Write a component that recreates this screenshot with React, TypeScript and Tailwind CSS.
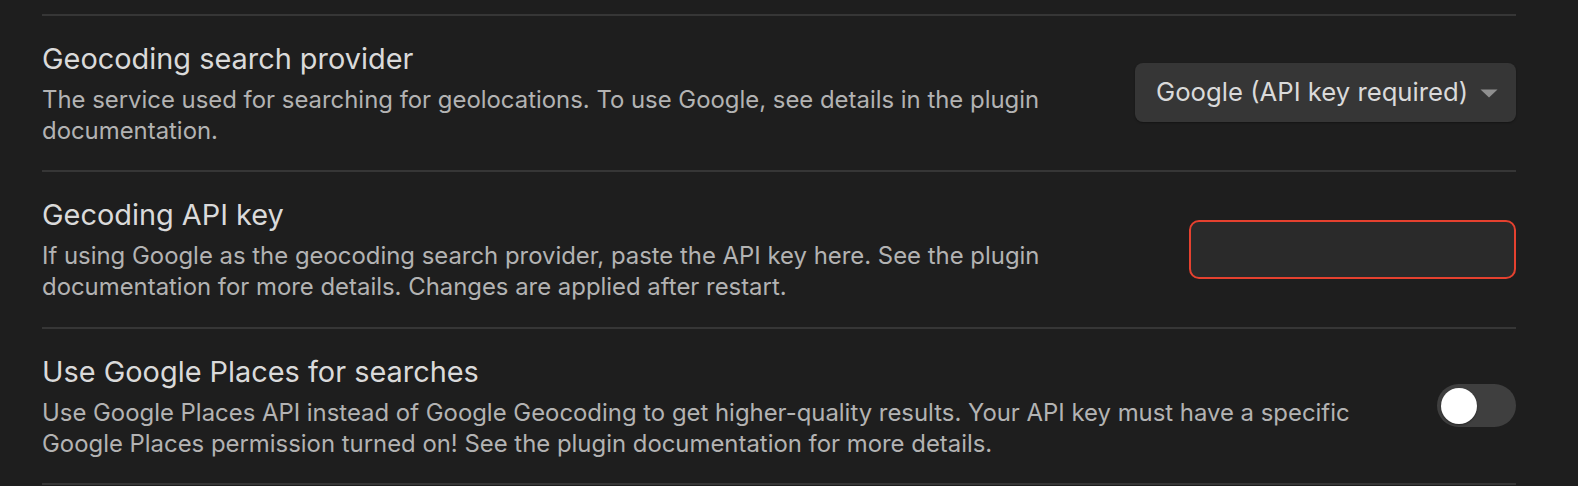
import React from "react";

function Row({
  title,
  lines,
  control,
}: {
  title: string;
  lines: string[];
  control: React.ReactNode;
}) {
  return (
    <div className="flex items-center border-b-2 border-[#363636] pt-[26px] pb-[24px]">
      <div className="flex-1 min-w-0">
        <div className="text-[28.9px] leading-[34px] text-[#dadada]">{title}</div>
        <div className="mt-[9px] text-[23.9px] leading-[30.7px] text-[#b3b3b3]">
          {lines.map((l, i) => (
            <React.Fragment key={i}>
              {l}
              {i < lines.length - 1 && <br />}
            </React.Fragment>
          ))}
        </div>
      </div>
      <div className="ml-7 mb-[3px] shrink-0">{control}</div>
    </div>
  );
}

export default function App() {
  return (
    <div className="min-h-screen bg-[#1e1e1e] pl-[42px] pr-[62px] pt-[14px] font-['Inter','Noto_Sans',sans-serif] antialiased">
      <div className="border-t-2 border-[#363636]">
        <Row
          title="Geocoding search provider"
          lines={[
            "The service used for searching for geolocations. To use Google, see details in the plugin",
            "documentation.",
          ]}
          control={
            <div className="flex h-[59px] w-[381px] items-center justify-between rounded-[8px] bg-[#363636] pl-[21px] pr-[18px] text-[25.7px] text-[#dadada] shadow-[0_1px_2px_rgba(0,0,0,0.35)]">
              <span className="whitespace-nowrap">Google (API key required)</span>
              <svg width="18" height="9" viewBox="0 0 18 9" className="mt-[1px] shrink-0">
                <path d="M0.5 0.5 H17.5 L9 8.5 Z" fill="#8f8f8f" />
              </svg>
            </div>
          }
        />
        <Row
          title="Gecoding API key"
          lines={[
            "If using Google as the geocoding search provider, paste the API key here. See the plugin",
            "documentation for more details. Changes are applied after restart.",
          ]}
          control={
            <input
              type="text"
              className="block h-[59px] w-[327px] rounded-[10px] border-2 border-[#e5412f] bg-[#2a2a2a] px-3 text-[24px] text-[#dadada] outline-none"
            />
          }
        />
        <Row
          title="Use Google Places for searches"
          lines={[
            "Use Google Places API instead of Google Geocoding to get higher-quality results. Your API key must have a specific",
            "Google Places permission turned on! See the plugin documentation for more details.",
          ]}
          control={
            <div className="flex h-[43px] w-[79px] items-center rounded-full bg-[#3f3f3f] pl-[3.5px]">
              <div className="h-[36px] w-[36px] rounded-full bg-white shadow-[0_1px_2px_rgba(0,0,0,0.4)]" />
            </div>
          }
        />
      </div>
    </div>
  );
}
